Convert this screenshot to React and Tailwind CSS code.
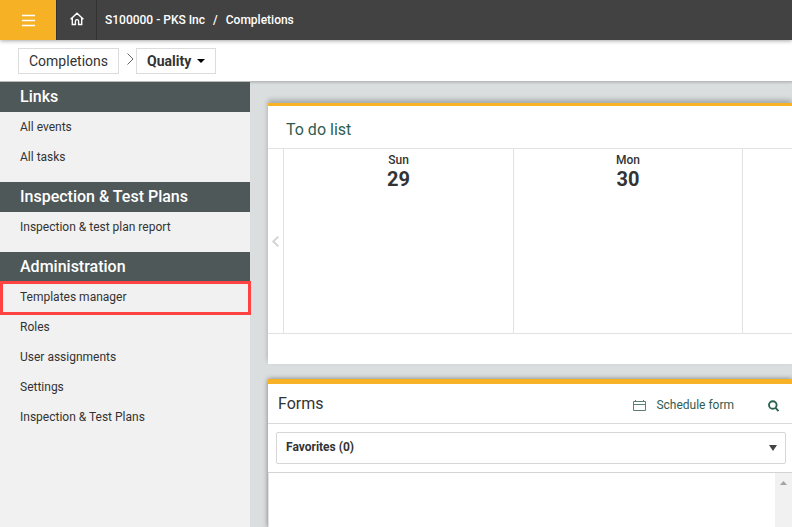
const sections = [
  { title: "Links", items: ["All events", "All tasks"] },
  { title: "Inspection & Test Plans", items: ["Inspection & test plan report"] },
  {
    title: "Administration",
    items: ["Templates manager", "Roles", "User assignments", "Settings", "Inspection & Test Plans"],
  },
];

const days = [
  { name: "Sun", date: "29" },
  { name: "Mon", date: "30" },
];

function TopBar() {
  return (
    <header className="relative z-20 flex h-10 bg-[#424242] text-white shadow-[0_1px_4px_rgba(0,0,0,0.35)]">
      <button aria-label="Menu" className="flex w-14 items-center justify-center bg-[#f6b224]">
        <svg width="13" height="13" viewBox="0 0 13 13" fill="none" stroke="#fff" strokeWidth="1.3">
          <path d="M0 1.5h13M0 6.5h13M0 11.5h13" />
        </svg>
      </button>
      <a href="#home" aria-label="Home" className="flex w-[41px] items-center justify-center border-x border-[#333] pb-0.5">
        <svg width="14" height="14" viewBox="0 0 14 14" fill="none" stroke="#fff" strokeWidth="1.4">
          <path d="M.6 7.2 7 1.2l6.4 6M2.3 6v6.5h3.1V9.2a1.6 1.6 0 0 1 3.2 0v3.3h3.1V6" />
        </svg>
      </a>
      <nav className="flex items-center gap-2 pl-2 text-xs font-medium">
        <a href="#project">S100000 - PKS Inc</a>
        <span>/</span>
        <a href="#completions">Completions</a>
      </nav>
    </header>
  );
}

function ModuleBar() {
  return (
    <div className="relative z-10 flex h-[42px] items-center border-b border-[#b9bbbb] bg-white pl-[18px] shadow-[0_1px_2px_rgba(0,0,0,0.15)]">
      <button className="h-[26px] border border-[#dcdcdc] px-2.5 text-sm leading-6 text-[#333]">Completions</button>
      <svg className="mr-0.5 mb-1 ml-2" width="7" height="12" viewBox="0 0 7 12" fill="none" stroke="#666" strokeWidth="1">
        <path d="M.5 .5 6 6 .5 11.5" />
      </svg>
      <button className="flex h-[26px] items-center gap-1.5 border border-[#dcdcdc] px-2.5 text-sm leading-6 font-bold text-[#333]">
        Quality
        <svg width="8" height="4" viewBox="0 0 8 4" fill="#000">
          <path d="M0 0h8L4 4z" />
        </svg>
      </button>
    </div>
  );
}

function SideBar() {
  return (
    <aside className="relative z-10 flex w-[250px] shrink-0 flex-col gap-2.5 bg-[#f1f1f1]">
      {sections.map((section) => (
        <section key={section.title}>
          <h2 className="h-[30px] bg-[#4e5859] px-5 text-base leading-[29px] font-medium text-white">{section.title}</h2>
          <ul>
            {section.items.map((item) => (
              <li key={item} className="relative h-[30px] px-5 text-xs leading-[30px] text-[#333]">
                <a href="#item">{item}</a>
                {item === "Templates manager" && (
                  <span className="absolute -top-px -right-px -bottom-[3px] left-0 border-3 border-[#ff4343]" />
                )}
              </li>
            ))}
          </ul>
        </section>
      ))}
    </aside>
  );
}

function TodoCard() {
  return (
    <section className="border-t-3 border-[#f8b225] bg-white pb-[30px] shadow-[0_-3px_5px_rgba(0,0,0,0.25)]">
      <h2 className="h-[42px] pl-[18px] text-base leading-[47px] text-[#2f5d50]">To do list</h2>
      <div className="flex h-[186px] border-y border-[#e2e2e2]">
        <button aria-label="Previous days" className="flex w-4 shrink-0 items-center justify-center border-r border-[#e2e2e2]">
          <svg width="7" height="11" viewBox="0 0 7 11" fill="none" stroke="#d2d2d2" strokeWidth="1.8">
            <path d="M6.3 .7 1.3 5.5l5 4.8" />
          </svg>
        </button>
        <div className="grid flex-1 grid-cols-[230fr_229fr_49fr]">
          {days.map((day) => (
            <div key={day.name} className="border-r border-[#e2e2e2] pt-1 text-center font-medium text-[#333]">
              <div className="text-xs leading-[14px]">{day.name}</div>
              <div className="text-xl leading-6 font-bold">{day.date}</div>
            </div>
          ))}
          <div />
        </div>
      </div>
    </section>
  );
}

function FormsCard() {
  return (
    <section className="flex flex-1 flex-col border-t-5 border-[#f8b225] bg-white shadow-[0_0_5px_rgba(0,0,0,0.45)]">
      <div className="flex h-10 items-center border-b border-[#d9d9d9] pr-[13px] pl-2.5">
        <h2 className="flex-1 text-base text-[#333]">Forms</h2>
        <button className="flex items-center gap-2.5 pt-0.5 text-xs text-[#2f5d50]">
          <svg className="mt-0.5" width="13" height="11" viewBox="0 0 13 11" fill="none" stroke="#5d8072" strokeWidth="1">
            <path d="M.5 1.5h12v9H.5zM.5 4.5h12M2.5 0v2M10.5 0v2" />
          </svg>
          Schedule form
        </button>
        <button aria-label="Search forms" className="ml-[34px] pt-1">
          <svg width="11" height="12" viewBox="0 0 11 12" fill="none" stroke="#2a6350" strokeWidth="1.9">
            <circle cx="4.8" cy="5" r="3.8" />
            <path d="m7.5 7.9 3 3.1" />
          </svg>
        </button>
      </div>
      <div className="relative border-b border-[#d3d3d3] px-2 py-2 pr-1.5">
        <select
          aria-label="Form group"
          className="block h-8 w-full appearance-none rounded-xs border border-[#d6d6d6] bg-white px-[9px] pb-0.5 text-xs font-bold text-[#333]"
        >
          <option>Favorites (0)</option>
        </select>
        <svg className="pointer-events-none absolute top-[21px] right-[15px]" width="8" height="6" viewBox="0 0 8 6" fill="#444">
          <path d="M0 0h8L4 6z" />
        </svg>
      </div>
      <div className="flex min-h-[54px] flex-1 justify-end border-l border-[#e2e2e2]">
        <div className="flex w-[17px] justify-center bg-[#f1f1f1] pt-2">
          <svg width="7" height="4" viewBox="0 0 7 4" fill="#a3a3a3">
            <path d="M3.5 0 7 4H0z" />
          </svg>
        </div>
      </div>
    </section>
  );
}

export default function App() {
  return (
    <div className="flex min-h-screen flex-col overflow-hidden bg-[#dadede] font-[Roboto,sans-serif]">
      <TopBar />
      <ModuleBar />
      <div className="flex flex-1">
        <SideBar />
        <main className="flex min-w-0 flex-1 flex-col gap-[15px] pt-[21px] pl-[18px]">
          <TodoCard />
          <FormsCard />
        </main>
      </div>
    </div>
  );
}
